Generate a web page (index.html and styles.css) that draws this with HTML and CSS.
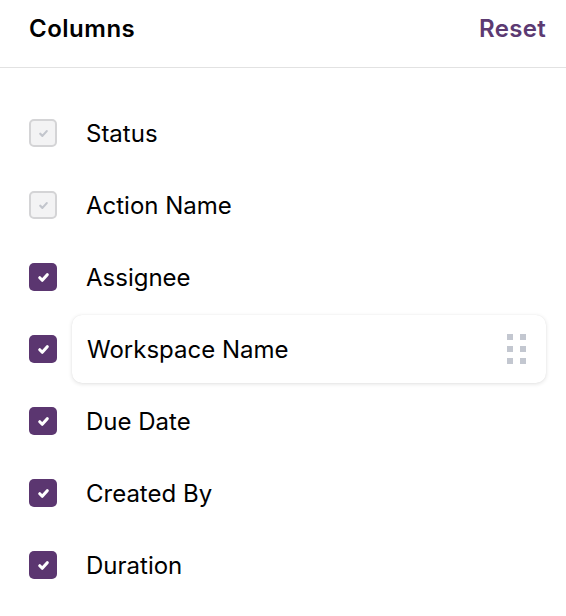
FILE: index.html
```html
<!DOCTYPE html>
<html>
<head>
<meta charset="utf-8">
<link rel="stylesheet" href="styles.css">
</head>
<body>
<div class="panel">
  <header class="header">
    <span class="title">Columns</span>
    <span class="reset">Reset</span>
  </header>
  <ul class="list">
    <li class="row"><span class="cb cb-disabled"><svg viewBox="0 0 12 12"><path d="M3 6.2l2 2 4-4.4"/></svg></span><span class="label">Status</span></li>
    <li class="row"><span class="cb cb-disabled"><svg viewBox="0 0 12 12"><path d="M3 6.2l2 2 4-4.4"/></svg></span><span class="label">Action Name</span></li>
    <li class="row"><span class="cb cb-on"><svg viewBox="0 0 12 12"><path d="M3 6.2l2 2 4-4.4"/></svg></span><span class="label">Assignee</span></li>
    <li class="row"><span class="cb cb-on"><svg viewBox="0 0 12 12"><path d="M3 6.2l2 2 4-4.4"/></svg></span><span class="label label-drag"><span class="name">Workspace Name</span><span class="handle"><i></i><i></i><i></i><i></i><i></i><i></i></span></span></li>
    <li class="row"><span class="cb cb-on"><svg viewBox="0 0 12 12"><path d="M3 6.2l2 2 4-4.4"/></svg></span><span class="label">Due Date</span></li>
    <li class="row"><span class="cb cb-on"><svg viewBox="0 0 12 12"><path d="M3 6.2l2 2 4-4.4"/></svg></span><span class="label">Created By</span></li>
    <li class="row"><span class="cb cb-on"><svg viewBox="0 0 12 12"><path d="M3 6.2l2 2 4-4.4"/></svg></span><span class="label">Duration</span></li>
  </ul>
</div>
</body>
</html>
```
FILE: styles.css
```css
* { box-sizing: border-box; }
body {
  margin: 0;
  background: #fff;
  font-family: Inter, "Liberation Sans", sans-serif;
  color: #000;
}
.header {
  height: 68px;
  display: flex;
  justify-content: space-between;
  align-items: flex-start;
  padding: 14px 20px 0 29px;
  border-bottom: 1px solid #e2e2e2;
}
.title {
  font-size: 24px;
  font-weight: 600;
  line-height: 30px;
  letter-spacing: 0.5px;
  color: #000;
}
.reset {
  font-size: 24px;
  font-weight: 600;
  line-height: 30px;
  letter-spacing: 0.3px;
  color: #5c3a72;
}
.list {
  list-style: none;
  margin: 0;
  padding: 29px 0 0 0;
}
.row {
  height: 72px;
  display: flex;
  align-items: center;
  padding-left: 29px;
}
.cb {
  width: 28px;
  height: 28px;
  border-radius: 5px;
  display: flex;
  align-items: center;
  justify-content: center;
  flex: none;
}
.cb svg {
  width: 15px;
  height: 15px;
  fill: none;
  stroke-width: 2.5;
  stroke-linecap: round;
  stroke-linejoin: round;
}
.cb-on {
  background: #5b3670;
}
.cb-on svg { stroke: #fff; }
.cb-disabled {
  background: #f3f3f4;
  border: 2px solid #d4d4d6;
}
.cb-disabled svg { stroke: #c2c5cc; width: 13px; height: 13px; stroke-width: 2; }
.label {
  flex: 1;
  margin-left: 15px;
  margin-right: 20px;
  padding-left: 14px;
  padding-top: 2px;
  font-size: 24px;
  line-height: 30px;
  display: flex;
  align-items: center;
}
.label-drag {
  height: 68px;
  background: #fff;
  border-radius: 10px;
  box-shadow: 0 1px 4px rgba(0,0,0,0.12), 0 0 1px rgba(0,0,0,0.08);
  padding-left: 15px;
  padding-right: 20px;
  padding-top: 0;
  justify-content: space-between;
}
.name { padding-top: 2px; }
.handle {
  display: grid;
  grid-template-columns: 6px 6px;
  grid-auto-rows: 6px;
  gap: 6px 7px;
}
.handle i {
  background: #c3c7d0;
  display: block;
}
```
